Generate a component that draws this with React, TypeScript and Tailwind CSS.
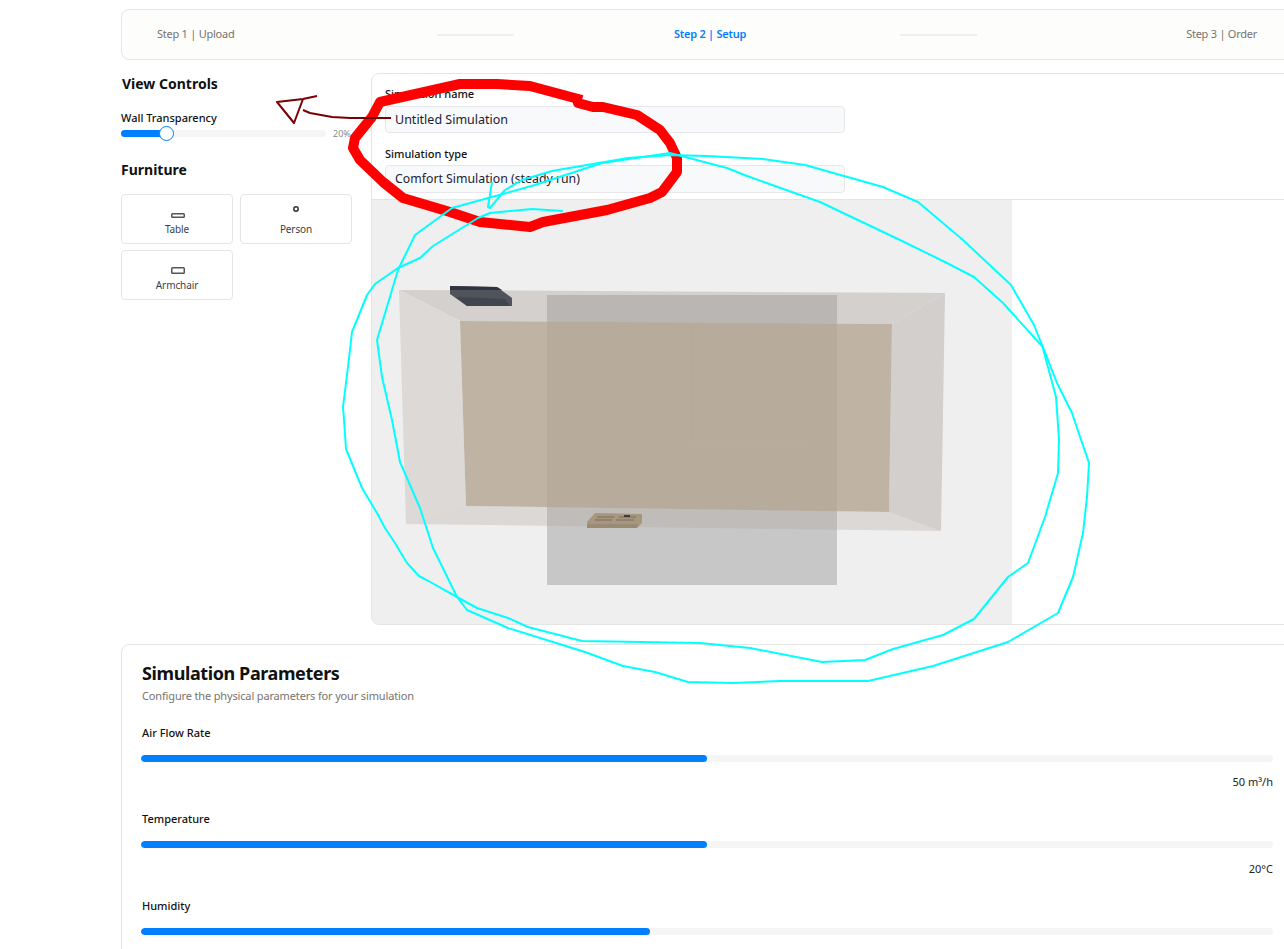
import React from 'react';

const RED_LOOP =
  '582,100 530,86 497,84 460,84 380,102 372,117 355,138 353,148 360,160 383,182 403,198 450,212 480,222 530,227 543,222 607,210 650,198 662,192 677,172 677,158 670,143 660,130 637,115 603,107 593,107 578,103 582,100';
const CYAN_LOOP_INNER =
  '492,182 488,207 490,208 505,190 522,180 552,171 628,158 670,155 707,156 763,159 805,165 883,187 918,202 963,240 1011,285 1034,325 1042,345 1056,397 1058,425 1059,440 1058,473 1045,517 1028,563 1008,577 974,619 943,635 893,649 865,660 822,662 750,648 700,643 582,641 528,627 508,618 477,608 457,597 432,583 419,576 407,563 395,543 385,528 377,513 362,488 346,449 344,420 343,407 348,367 352,332 367,295 375,284 398,268 420,258 433,246 478,218 490,213 532,209 563,211';
const CYAN_LOOP_OUTER =
  '670,153 727,168 747,176 820,202 900,240 945,262 974,277 1003,303 1041,345 1043,347 1057,383 1072,413 1076,425 1089,463 1087,497 1083,533 1073,577 1058,613 1008,642 933,666 868,681 780,681 733,683 688,682 655,672 623,666 585,652 508,628 467,610 457,597 433,548 420,508 400,462 392,420 382,377 377,340 398,270 415,235 452,208 535,185 602,163 670,153';

const Step = ({ label, active, className }: { label: string; active?: boolean; className: string }) => (
  <div className={`text-[11px] tracking-[-0.25px] ${active ? 'font-semibold text-[#0080ff]' : 'text-[#77736e]'} ${className}`}>{label}</div>
);

const StepLine = () => <div className="h-[2px] w-[77px] shrink-0 bg-[#efefed]" />;

const FurnitureButton = ({ label, children }: { label: string; children: React.ReactNode }) => (
  <div className="flex h-[50px] w-[112px] flex-col items-center rounded border border-[#e5e5e5] bg-white pt-[9px]">
    <svg width="16" height="16" viewBox="0 0 16 16" fill="none" stroke="#555555" strokeWidth="1.5">
      {children}
    </svg>
    <span className="mt-[2px] text-[10px] leading-[14px] tracking-[-0.1px] text-[#3a3f47]">{label}</span>
  </div>
);

const ParamSlider = ({ label, value, percent }: { label: string; value?: string; percent: number }) => (
  <div className="mt-[21px]">
    <div className="pl-px text-[11px] leading-4 font-medium text-[#111111]">{label}</div>
    <div className="mt-[14px] h-[7px] overflow-hidden rounded-full bg-[#f5f5f5]">
      <div className="h-full rounded-full bg-[#0080ff]" style={{ width: `${percent}%` }} />
    </div>
    {value && <div className="mt-[12.5px] text-right text-[11px] leading-4 text-[#222222]">{value}</div>}
  </div>
);

const RoomScene = () => (
  <svg width="640" height="424" viewBox="372 200 640 424" className="block">
    {/* floor plane, seen through the walls */}
    <rect x="547" y="295" width="290" height="290" fill="#c7c7c7" />
    {/* room walls */}
    <polygon points="399,290 945,293 892,324 460,321" fill="rgb(160,151,143)" fillOpacity="0.35" />
    <polygon points="399,290 460,321 466,506 406,524" fill="#dcd9d6" />
    <polygon points="945,293 892,324 889,512 941,531" fill="#d2cfcc" />
    <polygon points="406,524 466,506 889,512 941,531" fill="rgb(177,162,152)" fillOpacity="0.3" />
    <polygon points="460,321 892,324 889,512 466,506" fill="rgb(179,165,145)" fillOpacity="0.8" />
    <path d="M692 323V440" stroke="#b0ab95" strokeWidth="1" fill="none" />
    <path d="M692 440H808" stroke="#bda99a" strokeWidth="1" fill="none" />
    {/* ceiling unit */}
    <polygon points="450,286 497,287 512,298 512,306 467,306 450,294" fill="#50535a" />
    <polygon points="450,286 497,287 502,290 450,290" fill="#2f3540" />
    <polygon points="456,297 505,299 510,306 467,306" fill="#41454f" />
    {/* floor vent */}
    <polygon points="595,513 642,514 642,523 637,528 587,528 587,522" fill="#a8977f" />
    <polygon points="587,524 638,524 637,528 587,528" fill="#9c8b74" />
    <path d="M597 517H614M619 517H636M595 520H612M616 520H634" stroke="#6b6358" strokeWidth="0.8" />
    <rect x="624" y="515" width="6" height="2" fill="#3d3b38" />
  </svg>
);

const App: React.FC = () => {
  return (
    <div className="relative h-screen w-full overflow-hidden bg-white font-['Noto_Sans',sans-serif]">
      <div className="ml-[121px] w-[1172px] pt-[9px]">
        {/* Steps */}
        <div className="flex h-[51px] items-center rounded-lg border border-[#e5e5e5] bg-[#fdfdfb] px-[35px]">
          <Step label="Step 1 | Upload" className="w-[280px] shrink-0" />
          <StepLine />
          <Step label="Step 2 | Setup" active className="w-[386px] shrink-0 pl-[6px] text-center" />
          <StepLine />
          <Step label="Step 3 | Order" className="w-[280px] shrink-0 text-right" />
        </div>

        <div className="mt-[13px] flex gap-[19px]">
          {/* View controls */}
          <div className="w-[231px] shrink-0">
            <h2 className="mt-px pl-px text-sm leading-5 font-bold text-[#111111]">View Controls</h2>
            <div className="mt-[17px] text-[11px] leading-[14px] font-medium text-[#111111]">Wall Transparency</div>
            <div className="mt-[5px] flex h-[7px] items-center gap-[7px]">
              <div className="relative h-[7px] w-[205px] rounded-full bg-[#f5f5f5]">
                <div className="h-full w-[46px] rounded-full bg-[#0080ff]" />
                <div className="absolute top-[-4px] left-[38px] h-[15px] w-[15px] rounded-full border border-[#0080ff] bg-white" />
              </div>
              <span className="text-[9px] leading-none text-[#8a8a8f]">20%</span>
            </div>
            <h2 className="mt-[23px] text-sm leading-5 font-bold text-[#111111]">Furniture</h2>
            <div className="mt-[14px] flex flex-wrap gap-x-[7px] gap-y-[6px]">
              <FurnitureButton label="Table">
                <rect x="2.75" y="9.75" width="12.5" height="3.5" rx="0.8" />
              </FurnitureButton>
              <FurnitureButton label="Person">
                <circle cx="8" cy="5" r="2.2" stroke="#333333" />
              </FurnitureButton>
              <FurnitureButton label="Armchair">
                <rect x="2.75" y="7.75" width="12.5" height="5.5" rx="0.8" />
              </FurnitureButton>
            </div>
          </div>

          {/* Setup panel */}
          <div className="w-[922px] shrink-0 overflow-hidden rounded-lg border border-[#e5e5e5] bg-white">
            <div className="border-b border-[#e5e5e5] px-[13px] pt-[13px] pb-[6px]">
              <div className="text-[11px] leading-[14px] font-medium text-[#111111]">Simulation name</div>
              <div className="mt-[5px] flex h-[27px] w-[460px] items-center rounded border border-[#e5e7eb] bg-[#f8f9fb] px-[9px] pt-px text-[12.5px] text-[#1c2230]">
                Untitled Simulation
              </div>
              <div className="mt-[14px] text-[11px] leading-[14px] font-medium text-[#111111]">Simulation type</div>
              <div className="mt-[4px] flex h-[28px] w-[460px] items-center rounded border border-[#e5e7eb] bg-[#f8f9fb] px-[9px] text-[12.3px] text-[#1c2230]">
                Comfort Simulation (steady run)
              </div>
            </div>
            <div className="h-[424px] w-[640px] bg-[#efefef]">
              <RoomScene />
            </div>
          </div>
        </div>

        {/* Simulation parameters */}
        <div className="mt-[19px] rounded-lg border border-[#e5e5e5] bg-white px-[19px] pt-[15px] pb-6">
          <h2 className="pl-px text-lg leading-[26px] font-bold tracking-[-0.4px] text-[#111111]">Simulation Parameters</h2>
          <p className="mt-[1.6px] pl-px text-[11px] leading-4 tracking-[-0.15px] text-[#77736e]">Configure the physical parameters for your simulation</p>
          <ParamSlider label="Air Flow Rate" value="50 m³/h" percent={50} />
          <ParamSlider label="Temperature" value="20°C" percent={50} />
          <ParamSlider label="Humidity" percent={45} />
        </div>
      </div>

      {/* Hand-drawn annotations on top of the page */}
      <svg className="pointer-events-none absolute top-0 left-0" width="1284" height="949" viewBox="0 0 1284 949" fill="none">
        <polyline points={RED_LOOP} stroke="#ff0000" strokeWidth="10" strokeLinejoin="round" />
        <polyline points={CYAN_LOOP_INNER} stroke="#00ffff" strokeWidth="2" strokeLinejoin="round" />
        <polyline points={CYAN_LOOP_OUTER} stroke="#00ffff" strokeWidth="2" strokeLinejoin="round" />
        <polyline points="317,96 303,99 277,102 294,123 303,99" stroke="#7b0000" strokeWidth="2" strokeLinejoin="round" />
        <polyline points="303,110 310,113 332,117 350,118 391,118" stroke="#7b0000" strokeWidth="2" strokeLinejoin="round" />
      </svg>
    </div>
  );
};

export default App;
